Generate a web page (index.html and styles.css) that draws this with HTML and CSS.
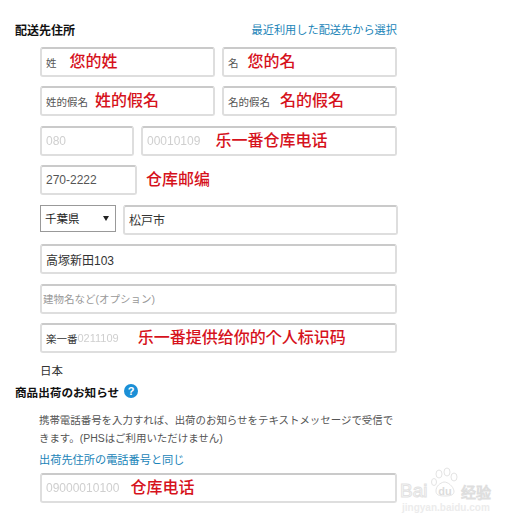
FILE: index.html
```html
<!DOCTYPE html>
<html lang="ja">
<head>
    <meta charset="UTF-8">
    <meta name="viewport" content="width=device-width, initial-scale=1.0">
    <title>配送先住所</title>
    <link rel="stylesheet" href="styles.css">
</head>
<body>
    <div class="page">
        <div class="section-head">
            <h2>配送先住所</h2>
            <a href="#" class="link">最近利用した配送先から選択</a>
        </div>
        <div class="form">
            <div class="row">
                <div class="field half"><span class="value small">姓</span><span class="note note-first">您的姓</span></div>
                <div class="field half"><span class="value small">名</span><span class="note note-given">您的名</span></div>
            </div>
            <div class="row">
                <div class="field half"><span class="value small">姓的假名</span><span class="note note-kana">姓的假名</span></div>
                <div class="field half"><span class="value small">名的假名</span><span class="note note-kana2">名的假名</span></div>
            </div>
            <div class="row">
                <div class="field area-code"><span class="value masked">080</span></div>
                <div class="field grow"><span class="value masked">00010109</span><span class="note note-phone">乐一番仓库电话</span></div>
            </div>
            <div class="row">
                <div class="field zip"><span class="value">270-2222</span></div>
                <span class="note note-zip">仓库邮编</span>
            </div>
            <div class="row row-wide">
                <div class="select"><span>千葉県</span><span class="arrow"></span></div>
                <div class="field grow"><span class="value dark">松戸市</span></div>
            </div>
            <div class="row">
                <div class="field grow"><span class="value dark">高塚新田103</span></div>
            </div>
            <div class="row">
                <div class="field grow placeholder"><span class="value small">建物名など(オプション)</span></div>
            </div>
            <div class="row">
                <div class="field grow"><span class="value small dark">楽一番</span><span class="value masked tight">0211109</span><span class="note note-id">乐一番提供给你的个人标识码</span></div>
            </div>
        </div>
        <div class="country">日本</div>
        <div class="notice-head">
            <h2 class="notice-title">商品出荷のお知らせ</h2>
            <span class="help">?</span>
        </div>
        <div class="notice">
            <p>携帯電話番号を入力すれば、出荷のお知らせをテキストメッセージで受信できます。(PHSはご利用いただけません)</p>
            <a href="#" class="link">出荷先住所の電話番号と同じ</a>
            <div class="row">
                <div class="field grow"><span class="value masked">09000010100</span><span class="note note-tel">仓库电话</span></div>
            </div>
        </div>
    </div>
    <div class="watermark">
        <svg class="wm-paw" width="30" height="32" viewBox="0 0 30 32" fill="white" stroke="#e4e4e4">
            <ellipse cx="4" cy="15" rx="2.5" ry="3.5"/>
            <ellipse cx="9" cy="7" rx="3" ry="4"/>
            <ellipse cx="17" cy="5" rx="3" ry="4"/>
            <ellipse cx="24" cy="10" rx="3" ry="4"/>
            <path d="M6 24c0-5 4-8 8-9 4 0 9 4 10 9 0 4-3 5-9 5-6 0-9-1-9-5z"/>
        </svg>
        <div class="wm-logo"><span class="wm-bai">Bai</span><span class="wm-du">du</span><span class="wm-cn">经验</span></div>
        <div class="wm-url">jingyan.baidu.com</div>
    </div>
</body>
</html>
```

FILE: styles.css
```css
body {
    font-family: "Liberation Sans", "Noto Sans CJK JP", sans-serif;
    background-color: white;
    color: #333;
    margin: 0;
    padding: 0;
}
.page {
    width: 382px;
    padding: 21px 0 0 15px;
}
h2 {
    font-size: 12px;
    font-weight: bold;
    color: #111;
    margin: 0;
}
.link {
    font-size: 11.2px;
    color: #1a84b8;
    text-decoration: none;
}
.section-head {
    display: flex;
    justify-content: space-between;
    align-items: center;
    height: 16px;
    margin-bottom: 10px;
}
.form {
    margin-left: 25px;
    display: flex;
    flex-direction: column;
    gap: 9.45px;
}
.row {
    display: flex;
    gap: 7px;
    align-items: flex-start;
}
.row-wide {
    width: 358px;
}
.field {
    box-sizing: border-box;
    height: 30px;
    display: flex;
    align-items: center;
    padding: 0 4px;
    background-color: white;
    border: 2px solid #dedede;
    border-top-color: #cacaca;
    border-radius: 3px;
    white-space: nowrap;
}
.half {
    width: 175px;
}
.grow {
    flex: 1;
}
.area-code {
    width: 94px;
}
.zip {
    width: 97px;
}
.value {
    font-size: 12px;
    color: #555;
}
.small {
    font-size: 10.5px;
}
.dark {
    color: #333;
}
.masked {
    color: #cfcfcf;
    filter: blur(0.5px);
}
.tight {
    font-size: 11px;
}
.placeholder {
    padding-left: 1px;
}
.placeholder .value {
    color: #999;
}
.note {
    font-family: "Liberation Sans", "Noto Sans CJK SC", sans-serif;
    font-size: 16px;
    line-height: 20px;
    font-weight: 500;
    color: #d6121c;
}
.note-first {
    margin-left: 13px;
}
.note-given {
    margin-left: 9px;
}
.note-kana {
    margin-left: 7px;
}
.note-kana2 {
    margin-left: 10px;
}
.note-phone {
    margin-left: 15px;
}
.note-zip {
    margin: 5px 0 0 2px;
}
.note-id {
    margin-left: 19px;
}
.note-tel {
    margin-left: 11px;
}
.select {
    box-sizing: border-box;
    width: 76px;
    height: 27px;
    flex-shrink: 0;
    display: flex;
    justify-content: space-between;
    align-items: center;
    padding: 0 6px 0 4px;
    font-size: 11.5px;
    color: #222;
    border: 1px solid #999;
}
.arrow {
    width: 0;
    height: 0;
    border-left: 3px solid transparent;
    border-right: 3px solid transparent;
    border-top: 5px solid #222;
}
.country {
    margin: 10px 0 0 25px;
    font-size: 11.5px;
    line-height: 16px;
}
.notice-head {
    display: flex;
    align-items: center;
    gap: 5px;
    margin-top: 5px;
    height: 16px;
}
.notice-title {
    font-size: 11.6px;
}
.help {
    width: 14px;
    height: 14px;
    margin-top: -3px;
    border-radius: 50%;
    background-color: #1b8fd6;
    color: white;
    font-size: 11px;
    font-weight: bold;
    line-height: 14px;
    text-align: center;
}
.notice {
    margin: 12px 0 0 24px;
}
.notice p {
    margin: 0 0 4px 0;
    font-size: 10.45px;
    line-height: 18px;
    color: #555;
}
.notice .link {
    display: block;
    margin-bottom: 5px;
    line-height: 16px;
}
.notice .field {
    margin-left: 1px;
}
.watermark {
    position: absolute;
    left: 400px;
    top: 482px;
    width: 92px;
    color: #e6e6e6;
}
.wm-paw {
    position: absolute;
    left: 30px;
    top: -15px;
}
.wm-logo {
    position: relative;
    display: flex;
    align-items: center;
    height: 18px;
    font-size: 19px;
    white-space: nowrap;
}
.wm-bai {
    color: white;
    -webkit-text-stroke: 1px #e2e2e2;
    width: 33px;
}
.wm-du {
    width: 24px;
    font-size: 11px;
    font-weight: bold;
    text-align: center;
    color: #dcdcdc;
}
.wm-cn {
    margin-left: 4px;
    font-size: 15px;
    color: white;
    -webkit-text-stroke: 1px #dedede;
}
.wm-url {
    margin: 2px 0 0 2px;
    font-size: 10px;
    font-weight: bold;
    line-height: 11px;
    color: #ececec;
    white-space: nowrap;
}
```
